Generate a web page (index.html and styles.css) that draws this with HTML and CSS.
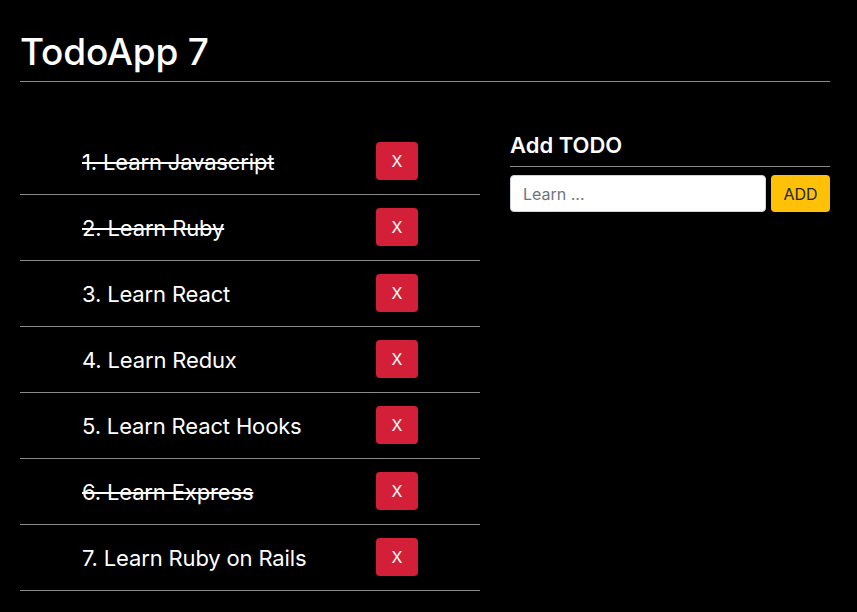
FILE: index.html
```html
<!DOCTYPE html>
<html>
<head>
<meta charset="utf-8">
<link rel="stylesheet" href="styles.css">
</head>
<body>
<div class="container">
  <h1 class="title">TodoApp 7</h1>
  <div class="layout">
    <ul class="todos">
      <li class="todo done"><span class="text">1. Learn Javascript</span><button class="del">X</button></li>
      <li class="todo done"><span class="text">2. Learn Ruby</span><button class="del">X</button></li>
      <li class="todo"><span class="text">3. Learn React</span><button class="del">X</button></li>
      <li class="todo"><span class="text">4. Learn Redux</span><button class="del">X</button></li>
      <li class="todo"><span class="text">5. Learn React Hooks</span><button class="del">X</button></li>
      <li class="todo done"><span class="text">6. Learn Express</span><button class="del">X</button></li>
      <li class="todo"><span class="text">7. Learn Ruby on Rails</span><button class="del">X</button></li>
    </ul>
    <div class="side">
      <h2 class="side-title">Add TODO</h2>
      <form class="add-form">
        <input class="add-input" type="text" placeholder="Learn ...">
        <button class="add-btn" type="button">ADD</button>
      </form>
    </div>
  </div>
</div>
</body>
</html>
```
FILE: styles.css
```css
html, body {
  margin: 0;
  padding: 0;
  background: #000;
  color: #fff;
  font-family: Inter, "Noto Sans", "Liberation Sans", sans-serif;
}
.container {
  padding: 0 27px 0 20px;
}
.title {
  margin: 0;
  padding-top: 30px;
  height: 51px;
  font-size: 37px;
  font-weight: 500;
  line-height: 44px;
  border-bottom: 1px solid #8a8a8a;
  letter-spacing: -0.2px;
}
.layout {
  display: grid;
  grid-template-columns: 460px 320px;
  column-gap: 30px;
  margin-top: 47px;
}
.todos {
  list-style: none;
  margin: 0;
  padding: 0;
}
.todo {
  display: flex;
  align-items: center;
  height: 65px;
  border-bottom: 1px solid #8a8a8a;
  padding-left: 62px;
}
.text {
  width: 294px;
  font-size: 22px;
  letter-spacing: -0.15px;
  padding-top: 1px;
}
.done .text {
  text-decoration: line-through;
}
.del {
  width: 42px;
  height: 38px;
  margin-top: -1px;
  border: 0;
  border-radius: 4px;
  background: #d31f37;
  color: #fff;
  font-family: inherit;
  font-size: 16px;
  padding: 0;
}
.side {
  padding-top: 4px;
}
.side-title {
  margin: 0;
  font-size: 22px;
  font-weight: 600;
  line-height: 25px;
  height: 33px;
  border-bottom: 1px solid #8a8a8a;
}
.add-form {
  display: flex;
  gap: 5px;
  margin-top: 8px;
}
.add-input {
  width: 256px;
  height: 37px;
  box-sizing: border-box;
  border: 1px solid #ced4da;
  border-radius: 4px;
  padding: 0 12px;
  font-family: inherit;
  font-size: 16px;
  color: #495057;
}
.add-input::placeholder {
  color: #6c757d;
}
.add-btn {
  width: 59px;
  height: 37px;
  border: 0;
  border-radius: 4px;
  background: #ffc107;
  color: #212529;
  font-family: inherit;
  font-size: 16px;
  padding: 0;
}
```
